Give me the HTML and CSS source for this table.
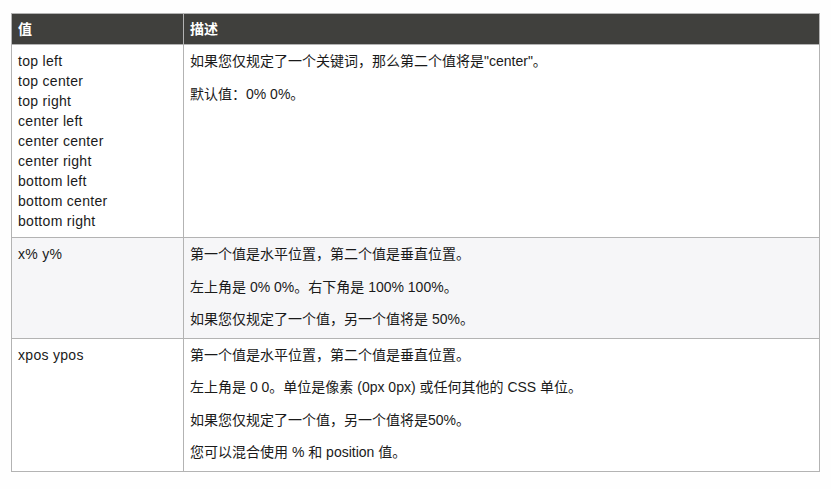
FILE: index.html
```html
<!DOCTYPE html>
<html lang="zh-CN">
<head>
<meta charset="utf-8">
<title>background-position</title>
<link rel="stylesheet" href="styles.css">
</head>
<body>
<table class="ref">
  <thead>
    <tr><th class="col-val">值</th><th>描述</th></tr>
  </thead>
  <tbody>
    <tr>
      <td class="val">top left<br>top center<br>top right<br>center left<br>center center<br>center right<br>bottom left<br>bottom center<br>bottom right</td>
      <td class="desc"><p>如果您仅规定了一个关键词，那么第二个值将是"center"。</p><p>默认值：0% 0%。</p></td>
    </tr>
    <tr class="alt">
      <td class="val">x% y%</td>
      <td class="desc"><p>第一个值是水平位置，第二个值是垂直位置。</p><p>左上角是 0% 0%。右下角是 100% 100%。</p><p>如果您仅规定了一个值，另一个值将是 50%。</p></td>
    </tr>
    <tr>
      <td class="val">xpos ypos</td>
      <td class="desc"><p>第一个值是水平位置，第二个值是垂直位置。</p><p>左上角是 0 0。单位是像素 (0px 0px) 或任何其他的 CSS 单位。</p><p>如果您仅规定了一个值，另一个值将是50%。</p><p>您可以混合使用 % 和 position 值。</p></td>
    </tr>
  </tbody>
</table>
</body>
</html>
```
FILE: styles.css
```css
html, body {
  margin: 0;
  padding: 0;
  background: #fefefe;
}
body {
  padding: 13px 11px 0 11px;
  font-family: "Liberation Sans", Arial, "Noto Sans CJK SC", sans-serif;
  font-size: 14px;
  line-height: 20px;
  color: #1a1a1a;
}
.ref {
  width: 809px;
  border-collapse: collapse;
  border: 1px solid #b3b3b3;
}
.ref th {
  background: #40403d;
  color: #ffffff;
  font-weight: bold;
  text-align: left;
  padding: 5px 6px;
  border-left: 1px solid #b3b3b3;
}
.ref th:first-child { border-left: none; }
.col-val { width: 159px; }
.ref td {
  vertical-align: top;
  padding: 6px 6px;
  border: 1px solid #b3b3b3;
  background: #ffffff;
}
.ref td.val { letter-spacing: 0.3px; }
.ref tr.alt td { background: #f6f6f8; }
.desc p { margin: 0 0 12.5px 0; }
.desc p:last-child { margin-bottom: 2.5px; }
```
